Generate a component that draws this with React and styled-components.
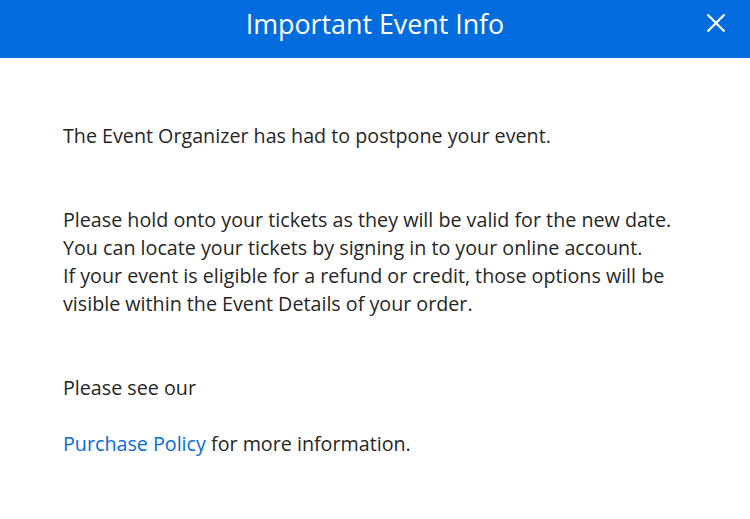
import React from 'react'
import styled, {createGlobalStyle} from 'styled-components'

const brandBlue = '#026cdf'
const textColor = '#262626'

const GlobalStyle = createGlobalStyle`
    html, body {
        margin: 0;
        padding: 0;
        background: #fff;
    }
    body {
        font-family: "Open Sans", "Liberation Sans", sans-serif;
    }
`

const Modal = styled.div`
    width: 750px;
    height: 519px;
    background: #fff;
    display: flex;
    flex-direction: column;
`

const Header = styled.div`
    height: 58px;
    background: ${brandBlue};
    display: flex;
    align-items: center;
    justify-content: center;
    position: relative;
`

const Title = styled.h1`
    margin: 0;
    font-size: 26.8px;
    font-weight: 400;
    color: #fff;
    line-height: 1;
    padding-bottom: 10px;
`

const CloseButton = styled.button`
    position: absolute;
    right: 22px;
    top: 11px;
    width: 24px;
    height: 24px;
    padding: 0;
    border: 0;
    background: transparent;
    display: flex;
    align-items: center;
    justify-content: center;
    cursor: pointer;
`

const Body = styled.div`
    padding: 64px 63px 0 63px;
    color: ${textColor};
    font-size: 19.7px;
    line-height: 28px;
`

const Paragraph = styled.p`
    margin: 0 0 ${p => p.gap ?? 56}px 0;
`

const Link = styled.a`
    color: ${brandBlue};
    text-decoration: none;
`

const CloseIcon = () => (
    <svg width="20" height="20" viewBox="0 0 20 20">
        <path d="M1.5 1.5 L18.5 18.5 M18.5 1.5 L1.5 18.5" stroke="#fff" strokeWidth="2.2"/>
    </svg>
)

export default function App() {
    return <Modal>
        <GlobalStyle/>
        <Header>
            <Title>Important Event Info</Title>
            <CloseButton aria-label="Close"><CloseIcon/></CloseButton>
        </Header>
        <Body>
            <Paragraph>The Event Organizer has had to postpone your event.</Paragraph>
            <Paragraph>
                Please hold onto your tickets as they will be valid for the new date.<br/>
                You can locate your tickets by signing in to your online account.<br/>
                If your event is eligible for a refund or credit, those options will be visible within the Event Details of your order.
            </Paragraph>
            <Paragraph gap={28}>Please see our</Paragraph>
            <Paragraph gap={0}><Link href="#">Purchase Policy</Link> for more information.</Paragraph>
        </Body>
    </Modal>
}
